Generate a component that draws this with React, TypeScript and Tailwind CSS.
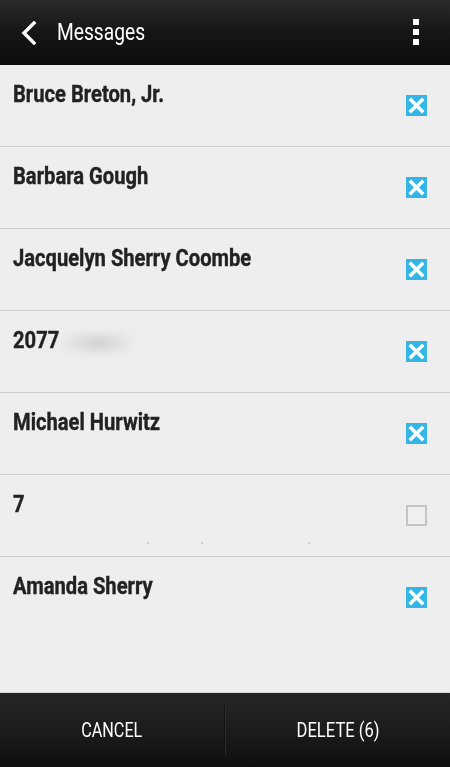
import React from "react";

type Row = { name: string; checked: boolean; extra?: "blur" | "dots" };

const rows: Row[] = [
  { name: "Bruce Breton, Jr.", checked: true },
  { name: "Barbara Gough", checked: true },
  { name: "Jacquelyn Sherry Coombe", checked: true },
  { name: "2077", checked: true, extra: "blur" },
  { name: "Michael Hurwitz", checked: true },
  { name: "7", checked: false, extra: "dots" },
  { name: "Amanda Sherry", checked: true },
];

function CheckIcon({ checked }: { checked: boolean }) {
  if (!checked) {
    return <div className="w-[21px] h-[21px] border-2 border-[#c4c4c4] bg-[#efefef]" />;
  }
  return (
    <svg width="21" height="21" viewBox="0 0 21 21">
      <rect x="0" y="0" width="21" height="21" fill="#33b5e5" />
      <path d="M5 5 L16 16 M16 5 L5 16" stroke="#ffffff" strokeWidth="3.6" strokeLinecap="square" />
    </svg>
  );
}

export default function App() {
  return (
    <div
      className="w-[450px] h-[767px] flex flex-col bg-[#eeeeee] overflow-hidden"
      style={{ fontFamily: "Roboto, 'Liberation Sans', sans-serif" }}
    >
      {/* Header */}
      <div className="h-[65px] shrink-0 flex items-center bg-gradient-to-b from-[#2b2b2b] via-[#161616] to-[#0c0c0c] relative">
        <svg width="20" height="24" viewBox="0 0 20 24" className="ml-[19px]">
          <path d="M15 2 L5 12 L15 22" stroke="#ffffff" strokeWidth="3.4" fill="none" strokeLinecap="square" />
        </svg>
        <span className="ml-[18px] text-[24px] text-white inline-block origin-left scale-x-[0.8] leading-none mt-[-1px]">
          Messages
        </span>
        <div className="ml-auto mr-[31px] flex flex-col gap-[4px] mt-[-2px]">
          <div className="w-[6px] h-[6px] bg-white" />
          <div className="w-[6px] h-[6px] bg-white" />
          <div className="w-[6px] h-[6px] bg-white" />
        </div>
      </div>

      {/* List */}
      <div className="flex-1 flex flex-col">
        {rows.map((r, i) => (
          <div
            key={i}
            className={`h-[82px] shrink-0 flex items-center relative ${
              i < rows.length - 1 ? "border-b border-[#cbcbcb]" : ""
            }`}
          >
            <div className="absolute left-[13px] top-[13px] flex items-center">
              <span className="text-[24px] font-bold text-[#222222] inline-block origin-left scale-x-[0.84] leading-[32px] whitespace-nowrap [-webkit-text-stroke:0.4px_#222222]">
                {r.name}
              </span>
            </div>
            {r.extra === "blur" && (
              <div className="absolute left-[64px] top-[24px] w-[68px] h-[16px] bg-gradient-to-r from-[#e6e6e6] via-[#d2d2d2] to-[#e8e8e8] rounded-full blur-[4px]" />
            )}
            {r.extra === "dots" && (
              <>
                <div className="absolute left-[147px] top-[67px] w-[2px] h-[2px] bg-[#d0d0d0]" />
                <div className="absolute left-[201px] top-[67px] w-[2px] h-[2px] bg-[#d0d0d0]" />
                <div className="absolute left-[308px] top-[67px] w-[2px] h-[2px] bg-[#d0d0d0]" />
              </>
            )}
            <div className="ml-auto mr-[23px] mt-[-1px]">
              <CheckIcon checked={r.checked} />
            </div>
          </div>
        ))}
      </div>

      {/* Bottom bar */}
      <div className="h-[75px] shrink-0 flex items-center border-t border-[#d6d6d6] bg-gradient-to-b from-[#262626] via-[#1c1c1c] to-[#0f0f0f]">
        <div className="flex-1 flex justify-center">
          <span className="text-[20px] text-white inline-block scale-x-[0.81] leading-none">CANCEL</span>
        </div>
        <div className="w-[2px] h-[50px] bg-[#111111] border-r border-[#2e2e2e]" />
        <div className="flex-1 flex justify-center">
          <span className="text-[20px] text-white inline-block scale-x-[0.83] leading-none">DELETE (6)</span>
        </div>
      </div>
    </div>
  );
}
